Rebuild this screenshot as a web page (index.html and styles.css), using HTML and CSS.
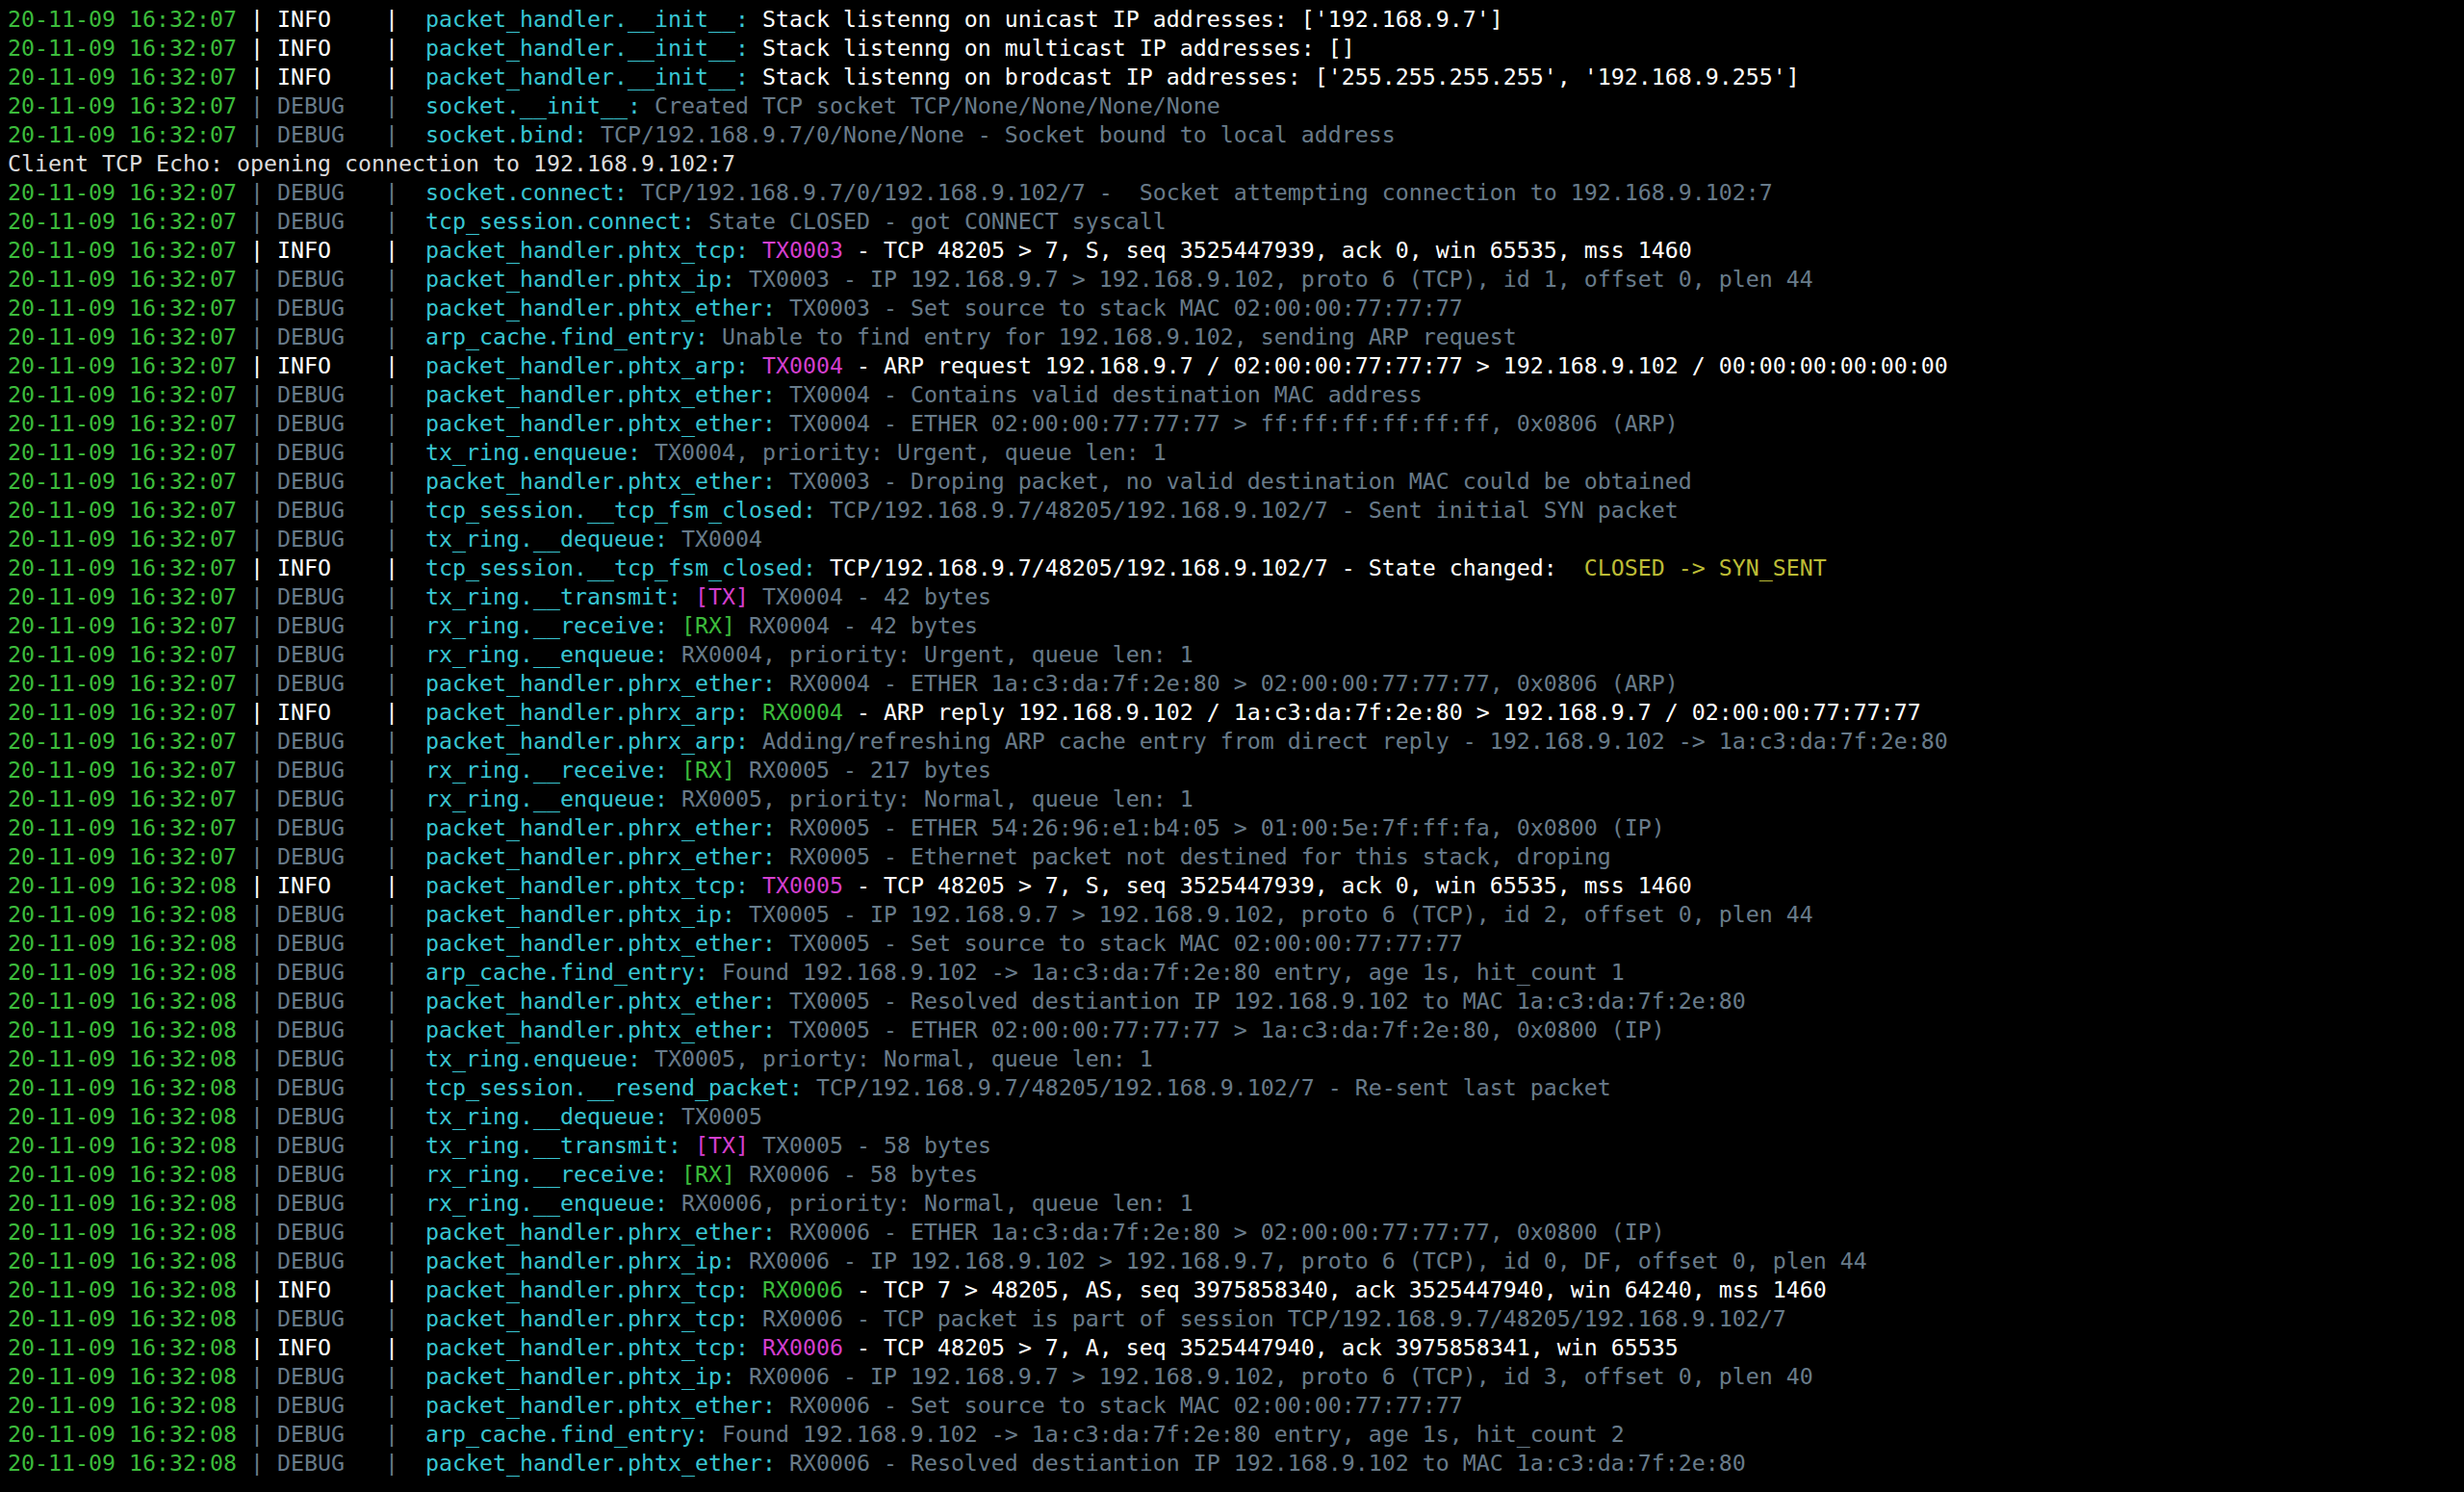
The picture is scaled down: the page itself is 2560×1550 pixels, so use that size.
FILE: index.html
```html
<!DOCTYPE html>
<html>
<head>
<meta charset="utf-8">
<link rel="stylesheet" href="styles.css">
</head>
<body>
<div class="term">
<div class="ln"><span class="t">20-11-09 16:32:07</span> <span class="i">| INFO    |  </span><span class="c">packet_handler.__init__:</span><span class="i"> Stack listenng on unicast IP addresses: ['192.168.9.7']</span></div>
<div class="ln"><span class="t">20-11-09 16:32:07</span> <span class="i">| INFO    |  </span><span class="c">packet_handler.__init__:</span><span class="i"> Stack listenng on multicast IP addresses: []</span></div>
<div class="ln"><span class="t">20-11-09 16:32:07</span> <span class="i">| INFO    |  </span><span class="c">packet_handler.__init__:</span><span class="i"> Stack listenng on brodcast IP addresses: ['255.255.255.255', '192.168.9.255']</span></div>
<div class="ln"><span class="t">20-11-09 16:32:07</span> <span class="d">| DEBUG   |  </span><span class="c">socket.__init__:</span><span class="d"> Created TCP socket TCP/None/None/None/None</span></div>
<div class="ln"><span class="t">20-11-09 16:32:07</span> <span class="d">| DEBUG   |  </span><span class="c">socket.bind:</span><span class="d"> TCP/192.168.9.7/0/None/None - Socket bound to local address</span></div>
<div class="ln"><span class="p">Client TCP Echo: opening connection to 192.168.9.102:7</span></div>
<div class="ln"><span class="t">20-11-09 16:32:07</span> <span class="d">| DEBUG   |  </span><span class="c">socket.connect:</span><span class="d"> TCP/192.168.9.7/0/192.168.9.102/7 -  Socket attempting connection to 192.168.9.102:7</span></div>
<div class="ln"><span class="t">20-11-09 16:32:07</span> <span class="d">| DEBUG   |  </span><span class="c">tcp_session.connect:</span><span class="d"> State CLOSED - got CONNECT syscall</span></div>
<div class="ln"><span class="t">20-11-09 16:32:07</span> <span class="i">| INFO    |  </span><span class="c">packet_handler.phtx_tcp:</span><span class="i"> <span class="m">TX0003</span> - TCP 48205 &gt; 7, S, seq 3525447939, ack 0, win 65535, mss 1460</span></div>
<div class="ln"><span class="t">20-11-09 16:32:07</span> <span class="d">| DEBUG   |  </span><span class="c">packet_handler.phtx_ip:</span><span class="d"> TX0003 - IP 192.168.9.7 &gt; 192.168.9.102, proto 6 (TCP), id 1, offset 0, plen 44</span></div>
<div class="ln"><span class="t">20-11-09 16:32:07</span> <span class="d">| DEBUG   |  </span><span class="c">packet_handler.phtx_ether:</span><span class="d"> TX0003 - Set source to stack MAC 02:00:00:77:77:77</span></div>
<div class="ln"><span class="t">20-11-09 16:32:07</span> <span class="d">| DEBUG   |  </span><span class="c">arp_cache.find_entry:</span><span class="d"> Unable to find entry for 192.168.9.102, sending ARP request</span></div>
<div class="ln"><span class="t">20-11-09 16:32:07</span> <span class="i">| INFO    |  </span><span class="c">packet_handler.phtx_arp:</span><span class="i"> <span class="m">TX0004</span> - ARP request 192.168.9.7 / 02:00:00:77:77:77 &gt; 192.168.9.102 / 00:00:00:00:00:00</span></div>
<div class="ln"><span class="t">20-11-09 16:32:07</span> <span class="d">| DEBUG   |  </span><span class="c">packet_handler.phtx_ether:</span><span class="d"> TX0004 - Contains valid destination MAC address</span></div>
<div class="ln"><span class="t">20-11-09 16:32:07</span> <span class="d">| DEBUG   |  </span><span class="c">packet_handler.phtx_ether:</span><span class="d"> TX0004 - ETHER 02:00:00:77:77:77 &gt; ff:ff:ff:ff:ff:ff, 0x0806 (ARP)</span></div>
<div class="ln"><span class="t">20-11-09 16:32:07</span> <span class="d">| DEBUG   |  </span><span class="c">tx_ring.enqueue:</span><span class="d"> TX0004, priority: Urgent, queue len: 1</span></div>
<div class="ln"><span class="t">20-11-09 16:32:07</span> <span class="d">| DEBUG   |  </span><span class="c">packet_handler.phtx_ether:</span><span class="d"> TX0003 - Droping packet, no valid destination MAC could be obtained</span></div>
<div class="ln"><span class="t">20-11-09 16:32:07</span> <span class="d">| DEBUG   |  </span><span class="c">tcp_session.__tcp_fsm_closed:</span><span class="d"> TCP/192.168.9.7/48205/192.168.9.102/7 - Sent initial SYN packet</span></div>
<div class="ln"><span class="t">20-11-09 16:32:07</span> <span class="d">| DEBUG   |  </span><span class="c">tx_ring.__dequeue:</span><span class="d"> TX0004</span></div>
<div class="ln"><span class="t">20-11-09 16:32:07</span> <span class="i">| INFO    |  </span><span class="c">tcp_session.__tcp_fsm_closed:</span><span class="i"> TCP/192.168.9.7/48205/192.168.9.102/7 - State changed:  <span class="y">CLOSED -&gt; SYN_SENT</span></span></div>
<div class="ln"><span class="t">20-11-09 16:32:07</span> <span class="d">| DEBUG   |  </span><span class="c">tx_ring.__transmit:</span><span class="d"> <span class="m">[TX]</span> TX0004 - 42 bytes</span></div>
<div class="ln"><span class="t">20-11-09 16:32:07</span> <span class="d">| DEBUG   |  </span><span class="c">rx_ring.__receive:</span><span class="d"> <span class="g">[RX]</span> RX0004 - 42 bytes</span></div>
<div class="ln"><span class="t">20-11-09 16:32:07</span> <span class="d">| DEBUG   |  </span><span class="c">rx_ring.__enqueue:</span><span class="d"> RX0004, priority: Urgent, queue len: 1</span></div>
<div class="ln"><span class="t">20-11-09 16:32:07</span> <span class="d">| DEBUG   |  </span><span class="c">packet_handler.phrx_ether:</span><span class="d"> RX0004 - ETHER 1a:c3:da:7f:2e:80 &gt; 02:00:00:77:77:77, 0x0806 (ARP)</span></div>
<div class="ln"><span class="t">20-11-09 16:32:07</span> <span class="i">| INFO    |  </span><span class="c">packet_handler.phrx_arp:</span><span class="i"> <span class="g">RX0004</span> - ARP reply 192.168.9.102 / 1a:c3:da:7f:2e:80 &gt; 192.168.9.7 / 02:00:00:77:77:77</span></div>
<div class="ln"><span class="t">20-11-09 16:32:07</span> <span class="d">| DEBUG   |  </span><span class="c">packet_handler.phrx_arp:</span><span class="d"> Adding/refreshing ARP cache entry from direct reply - 192.168.9.102 -&gt; 1a:c3:da:7f:2e:80</span></div>
<div class="ln"><span class="t">20-11-09 16:32:07</span> <span class="d">| DEBUG   |  </span><span class="c">rx_ring.__receive:</span><span class="d"> <span class="g">[RX]</span> RX0005 - 217 bytes</span></div>
<div class="ln"><span class="t">20-11-09 16:32:07</span> <span class="d">| DEBUG   |  </span><span class="c">rx_ring.__enqueue:</span><span class="d"> RX0005, priority: Normal, queue len: 1</span></div>
<div class="ln"><span class="t">20-11-09 16:32:07</span> <span class="d">| DEBUG   |  </span><span class="c">packet_handler.phrx_ether:</span><span class="d"> RX0005 - ETHER 54:26:96:e1:b4:05 &gt; 01:00:5e:7f:ff:fa, 0x0800 (IP)</span></div>
<div class="ln"><span class="t">20-11-09 16:32:07</span> <span class="d">| DEBUG   |  </span><span class="c">packet_handler.phrx_ether:</span><span class="d"> RX0005 - Ethernet packet not destined for this stack, droping</span></div>
<div class="ln"><span class="t">20-11-09 16:32:08</span> <span class="i">| INFO    |  </span><span class="c">packet_handler.phtx_tcp:</span><span class="i"> <span class="m">TX0005</span> - TCP 48205 &gt; 7, S, seq 3525447939, ack 0, win 65535, mss 1460</span></div>
<div class="ln"><span class="t">20-11-09 16:32:08</span> <span class="d">| DEBUG   |  </span><span class="c">packet_handler.phtx_ip:</span><span class="d"> TX0005 - IP 192.168.9.7 &gt; 192.168.9.102, proto 6 (TCP), id 2, offset 0, plen 44</span></div>
<div class="ln"><span class="t">20-11-09 16:32:08</span> <span class="d">| DEBUG   |  </span><span class="c">packet_handler.phtx_ether:</span><span class="d"> TX0005 - Set source to stack MAC 02:00:00:77:77:77</span></div>
<div class="ln"><span class="t">20-11-09 16:32:08</span> <span class="d">| DEBUG   |  </span><span class="c">arp_cache.find_entry:</span><span class="d"> Found 192.168.9.102 -&gt; 1a:c3:da:7f:2e:80 entry, age 1s, hit_count 1</span></div>
<div class="ln"><span class="t">20-11-09 16:32:08</span> <span class="d">| DEBUG   |  </span><span class="c">packet_handler.phtx_ether:</span><span class="d"> TX0005 - Resolved destiantion IP 192.168.9.102 to MAC 1a:c3:da:7f:2e:80</span></div>
<div class="ln"><span class="t">20-11-09 16:32:08</span> <span class="d">| DEBUG   |  </span><span class="c">packet_handler.phtx_ether:</span><span class="d"> TX0005 - ETHER 02:00:00:77:77:77 &gt; 1a:c3:da:7f:2e:80, 0x0800 (IP)</span></div>
<div class="ln"><span class="t">20-11-09 16:32:08</span> <span class="d">| DEBUG   |  </span><span class="c">tx_ring.enqueue:</span><span class="d"> TX0005, priorty: Normal, queue len: 1</span></div>
<div class="ln"><span class="t">20-11-09 16:32:08</span> <span class="d">| DEBUG   |  </span><span class="c">tcp_session.__resend_packet:</span><span class="d"> TCP/192.168.9.7/48205/192.168.9.102/7 - Re-sent last packet</span></div>
<div class="ln"><span class="t">20-11-09 16:32:08</span> <span class="d">| DEBUG   |  </span><span class="c">tx_ring.__dequeue:</span><span class="d"> TX0005</span></div>
<div class="ln"><span class="t">20-11-09 16:32:08</span> <span class="d">| DEBUG   |  </span><span class="c">tx_ring.__transmit:</span><span class="d"> <span class="m">[TX]</span> TX0005 - 58 bytes</span></div>
<div class="ln"><span class="t">20-11-09 16:32:08</span> <span class="d">| DEBUG   |  </span><span class="c">rx_ring.__receive:</span><span class="d"> <span class="g">[RX]</span> RX0006 - 58 bytes</span></div>
<div class="ln"><span class="t">20-11-09 16:32:08</span> <span class="d">| DEBUG   |  </span><span class="c">rx_ring.__enqueue:</span><span class="d"> RX0006, priority: Normal, queue len: 1</span></div>
<div class="ln"><span class="t">20-11-09 16:32:08</span> <span class="d">| DEBUG   |  </span><span class="c">packet_handler.phrx_ether:</span><span class="d"> RX0006 - ETHER 1a:c3:da:7f:2e:80 &gt; 02:00:00:77:77:77, 0x0800 (IP)</span></div>
<div class="ln"><span class="t">20-11-09 16:32:08</span> <span class="d">| DEBUG   |  </span><span class="c">packet_handler.phrx_ip:</span><span class="d"> RX0006 - IP 192.168.9.102 &gt; 192.168.9.7, proto 6 (TCP), id 0, DF, offset 0, plen 44</span></div>
<div class="ln"><span class="t">20-11-09 16:32:08</span> <span class="i">| INFO    |  </span><span class="c">packet_handler.phrx_tcp:</span><span class="i"> <span class="g">RX0006</span> - TCP 7 &gt; 48205, AS, seq 3975858340, ack 3525447940, win 64240, mss 1460</span></div>
<div class="ln"><span class="t">20-11-09 16:32:08</span> <span class="d">| DEBUG   |  </span><span class="c">packet_handler.phrx_tcp:</span><span class="d"> RX0006 - TCP packet is part of session TCP/192.168.9.7/48205/192.168.9.102/7</span></div>
<div class="ln"><span class="t">20-11-09 16:32:08</span> <span class="i">| INFO    |  </span><span class="c">packet_handler.phtx_tcp:</span><span class="i"> <span class="m">RX0006</span> - TCP 48205 &gt; 7, A, seq 3525447940, ack 3975858341, win 65535</span></div>
<div class="ln"><span class="t">20-11-09 16:32:08</span> <span class="d">| DEBUG   |  </span><span class="c">packet_handler.phtx_ip:</span><span class="d"> RX0006 - IP 192.168.9.7 &gt; 192.168.9.102, proto 6 (TCP), id 3, offset 0, plen 40</span></div>
<div class="ln"><span class="t">20-11-09 16:32:08</span> <span class="d">| DEBUG   |  </span><span class="c">packet_handler.phtx_ether:</span><span class="d"> RX0006 - Set source to stack MAC 02:00:00:77:77:77</span></div>
<div class="ln"><span class="t">20-11-09 16:32:08</span> <span class="d">| DEBUG   |  </span><span class="c">arp_cache.find_entry:</span><span class="d"> Found 192.168.9.102 -&gt; 1a:c3:da:7f:2e:80 entry, age 1s, hit_count 2</span></div>
<div class="ln"><span class="t">20-11-09 16:32:08</span> <span class="d">| DEBUG   |  </span><span class="c">packet_handler.phtx_ether:</span><span class="d"> RX0006 - Resolved destiantion IP 192.168.9.102 to MAC 1a:c3:da:7f:2e:80</span></div>
</div>
</body>
</html>
```
FILE: styles.css
```css
html, body {
  margin: 0;
  padding: 0;
  background: #000;
}
body {
  width: 2560px;
  height: 1550px;
  overflow: hidden;
}
.term {
  padding: 5px 8px;
  font-family: "DejaVu Sans Mono", "Liberation Mono", monospace;
  font-size: 23.25px;
  line-height: 30px;
  color: #d9d9d9;
}
.ln {
  height: 30px;
  white-space: pre;
}
.t { color: #3cbc3c; }
.i { color: #ffffff; }
.d { color: #687b8a; }
.c { color: #38c6d3; }
.m { color: #d43fcf; }
.g { color: #3cbc3c; }
.y { color: #bcbc36; }
.p { color: #dcdcdc; }
```
